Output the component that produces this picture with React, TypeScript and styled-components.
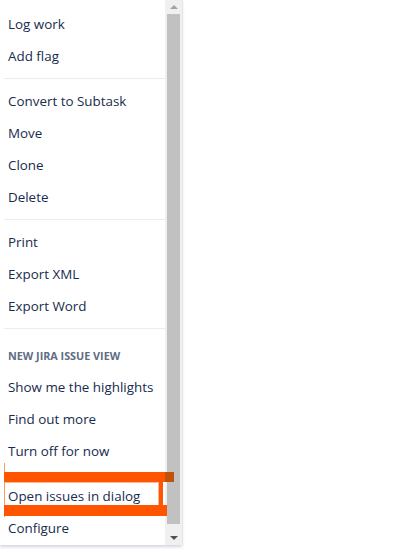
import styled, { createGlobalStyle } from 'styled-components';

const GlobalStyle = createGlobalStyle`
  html, body {
    margin: 0;
    padding: 0;
    background: #ffffff;
  }
  body {
    font-family: "Open Sans", "Noto Sans", "Liberation Sans", sans-serif;
  }
`;

const sections = [
  { items: ['Log work', 'Add flag'] },
  { items: ['Convert to Subtask', 'Move', 'Clone', 'Delete'] },
  { items: ['Print', 'Export XML', 'Export Word'] },
  { heading: 'New Jira issue view', items: ['Show me the highlights', 'Find out more', 'Turn off for now'] },
  { items: ['Open issues in dialog', 'Configure'] },
];

const Page = styled.div`
  width: 408px;
  height: 549px;
  display: flex;
  align-items: flex-start;
  position: relative;
  overflow: hidden;
`;

const Panel = styled.div`
  position: relative;
  width: 182px;
  height: 545px;
  display: flex;
  background: #fff;
  box-shadow: 1px 0 0 #e4e6ea, 0 2px 3px rgba(9, 30, 66, 0.18);
`;

const MenuList = styled.div`
  flex: 1;
  overflow: hidden;
  padding-top: 2px;
`;

const Section = styled.div<{ $first?: boolean }>`
  padding: 6px 0;
  margin-left: 4px;
  border-top: ${(p) => (p.$first ? 'none' : '1px solid #ebecf0')};
`;

const Heading = styled.div`
  padding: 14px 4px 8px;
  line-height: 14px;
  font-size: 10.8px;
  font-weight: 700;
  color: #5e6c84;
  text-transform: uppercase;
  white-space: nowrap;
`;

const Item = styled.div`
  height: 32px;
  line-height: 32px;
  padding: 0 4px;
  font-size: 13.4px;
  color: #172b4d;
  white-space: nowrap;
`;

const Scrollbar = styled.div`
  width: 17px;
  flex: none;
  display: flex;
  flex-direction: column;
  background: #f0f0f0;
`;

const ArrowButton = styled.div<{ $down?: boolean; $active?: boolean }>`
  height: 14px;
  flex: none;
  display: flex;
  align-items: center;
  justify-content: center;
  &::before {
    content: '';
    width: 0;
    height: 0;
    border-left: 4px solid transparent;
    border-right: 4px solid transparent;
    ${(p) =>
      p.$down
        ? `border-top: 4px solid ${p.$active ? '#505050' : '#a3a3a3'};`
        : `border-bottom: 4px solid ${p.$active ? '#505050' : '#a3a3a3'};`}
  }
`;

const Thumb = styled.div`
  flex: 1;
  margin: 0 2px 7px;
  background: #c1c1c1;
`;

const Behind = styled.div`
  width: 2px;
  display: flex;
  flex-direction: column;
`;

const BehindMark = styled.div<{ $top: number; $height: number; $color: string }>`
  margin-top: ${(p) => p.$top}px;
  height: ${(p) => p.$height}px;
  width: 1px;
  background: ${(p) => p.$color};
`;

/* hand-drawn orange highlight over the menu */
const Mark = styled.div<{ $x: number; $y: number; $w: number; $h: number; $color: string }>`
  position: absolute;
  left: ${(p) => p.$x}px;
  top: ${(p) => p.$y}px;
  width: ${(p) => p.$w}px;
  height: ${(p) => p.$h}px;
  background: ${(p) => p.$color};
`;

const Outline = styled.div`
  position: absolute;
  left: 4px;
  top: 482px;
  width: 153px;
  height: 22px;
  border: 1px solid #ffb793;
`;

const ORANGE = '#ff5500';

function App() {
  return (
    <>
      <GlobalStyle />
      <Page>
        <Panel>
          <MenuList>
            {sections.map((section, i) => (
              <Section key={i} $first={i === 0}>
                {section.heading && <Heading>{section.heading}</Heading>}
                {section.items.map((item) => (
                  <Item key={item}>{item}</Item>
                ))}
              </Section>
            ))}
          </MenuList>
          <Scrollbar>
            <ArrowButton />
            <Thumb />
            <ArrowButton $down $active />
          </Scrollbar>
        </Panel>
        <Behind>
          <BehindMark $top={100} $height={32} $color="#2c3e66" />
          <BehindMark $top={183} $height={6} $color="#6a8fc0" />
        </Behind>

        <Outline />
        <Mark $x={4} $y={463} $w={1} $h={54} $color="#ff9a66" />
        <Mark $x={4} $y={472} $w={161} $h={10} $color={ORANGE} />
        <Mark $x={165} $y={472} $w={9} $h={10} $color="#c05208" />
        <Mark $x={159} $y={472} $w={4} $h={36} $color={ORANGE} />
        <Mark $x={4} $y={505} $w={163} $h={11} $color={ORANGE} />
      </Page>
    </>
  );
}

export default App;
